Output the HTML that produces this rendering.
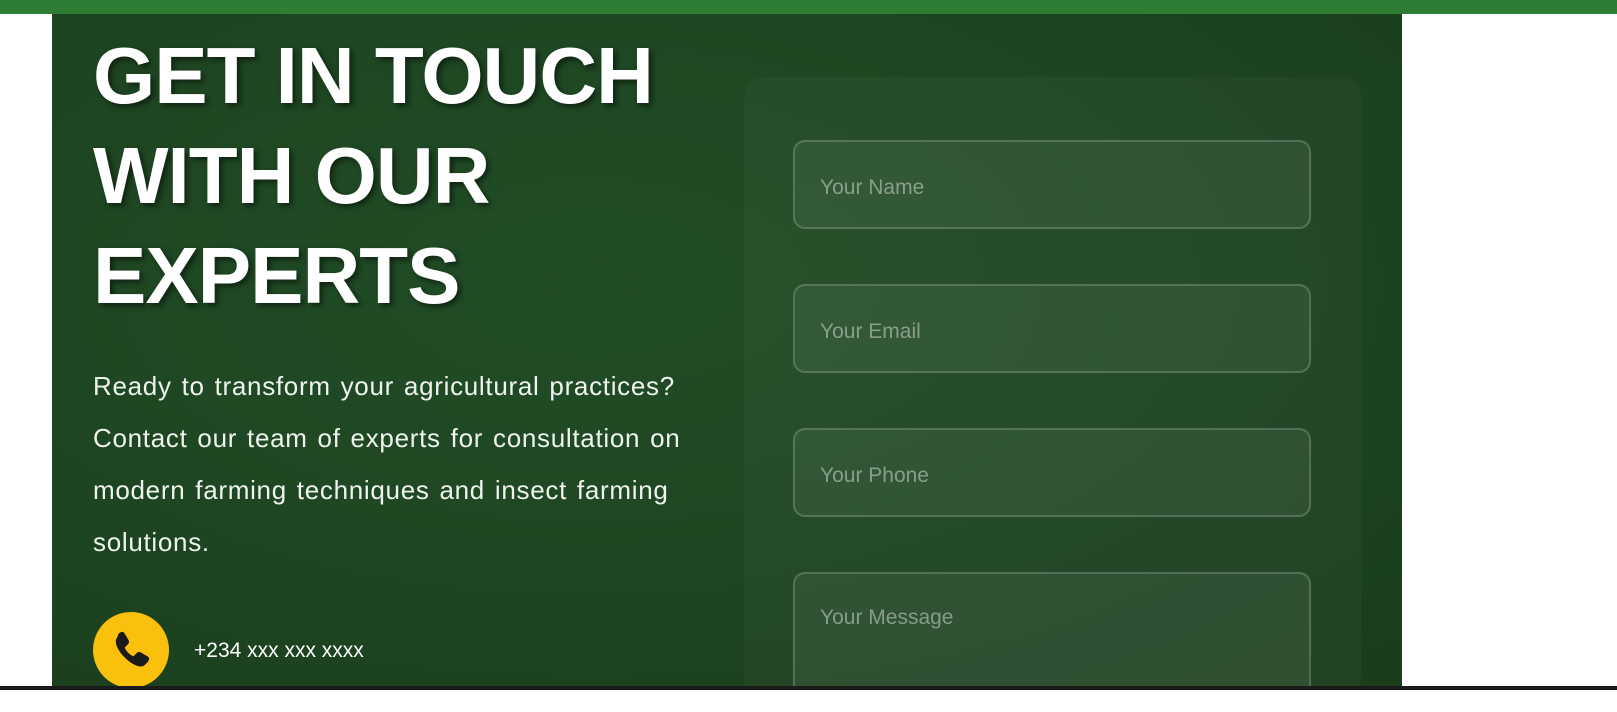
<!DOCTYPE html>
<html><head><meta charset="utf-8"><style>
*{margin:0;padding:0;box-sizing:border-box}
body{width:1617px;height:690px;overflow:hidden;background:#fff;font-family:"Liberation Sans",sans-serif;position:relative}
.top{position:absolute;left:0;top:0;width:1617px;height:14px;background:#2e7d32}
.panel{position:absolute;left:52px;top:14px;width:1350px;height:673px;background:radial-gradient(ellipse at 40% 40%,#214d26 0%,#1e4622 50%,#1a3d1c 100%)}
.bot{position:absolute;left:0;top:686px;width:1617px;height:4px;background:#1a1a1a}
h1{position:absolute;left:93px;top:26px;color:#fff;font-size:80px;line-height:100px;font-weight:bold;text-shadow:3px 3px 6px rgba(0,0,0,.5);letter-spacing:-1px}
p{position:absolute;left:93px;top:360px;color:#eef3ee;font-size:26px;line-height:52px;letter-spacing:0.7px;word-spacing:2px}
.circle{position:absolute;left:93px;top:612px;width:76px;height:76px;border-radius:50%;background:#f9c10d}
.phone{position:absolute;left:194px;top:639px;color:#fff;font-size:21px}
.card{position:absolute;left:744px;top:77px;width:617px;height:620px;border-radius:20px;background:rgba(255,255,255,0.03)}
.in{position:absolute;left:793px;width:518px;height:89px;border:2px solid rgba(255,255,255,0.18);border-radius:12px;background:rgba(255,255,255,0.06);color:rgba(255,255,255,0.42);font-size:21px;padding-left:25px;line-height:91px}
</style></head><body>
<div class="top"></div>
<div class="panel"></div>
<div class="card"></div>
<h1>GET IN TOUCH<br>WITH OUR<br>EXPERTS</h1>
<p>Ready to transform your agricultural practices?<br>Contact our team of experts for consultation on<br>modern farming techniques and insect farming<br>solutions.</p>
<div class="circle"><svg width="76" height="76" viewBox="0 0 76 76"><g transform="translate(38 38) scale(1.25) translate(-38 -38)"><path d="M28 25c2-2 4-2 5 0l3 5c1 2 0 3-1 4l-2 2c1 3 4 6 7 7l2-2c1-1 2-2 4-1l5 3c2 1 2 3 0 5l-2 2c-3 3-10 0-16-6s-9-13-6-16z" fill="#1a1a1a"/></g></svg></div>
<div class="phone">+234 xxx xxx xxxx</div>
<div class="in" style="top:140px">Your Name</div>
<div class="in" style="top:284px">Your Email</div>
<div class="in" style="top:428px">Your Phone</div>
<div class="in" style="top:572px;height:140px;line-height:88px">Your Message</div>
<div class="bot"></div>
</body></html>
